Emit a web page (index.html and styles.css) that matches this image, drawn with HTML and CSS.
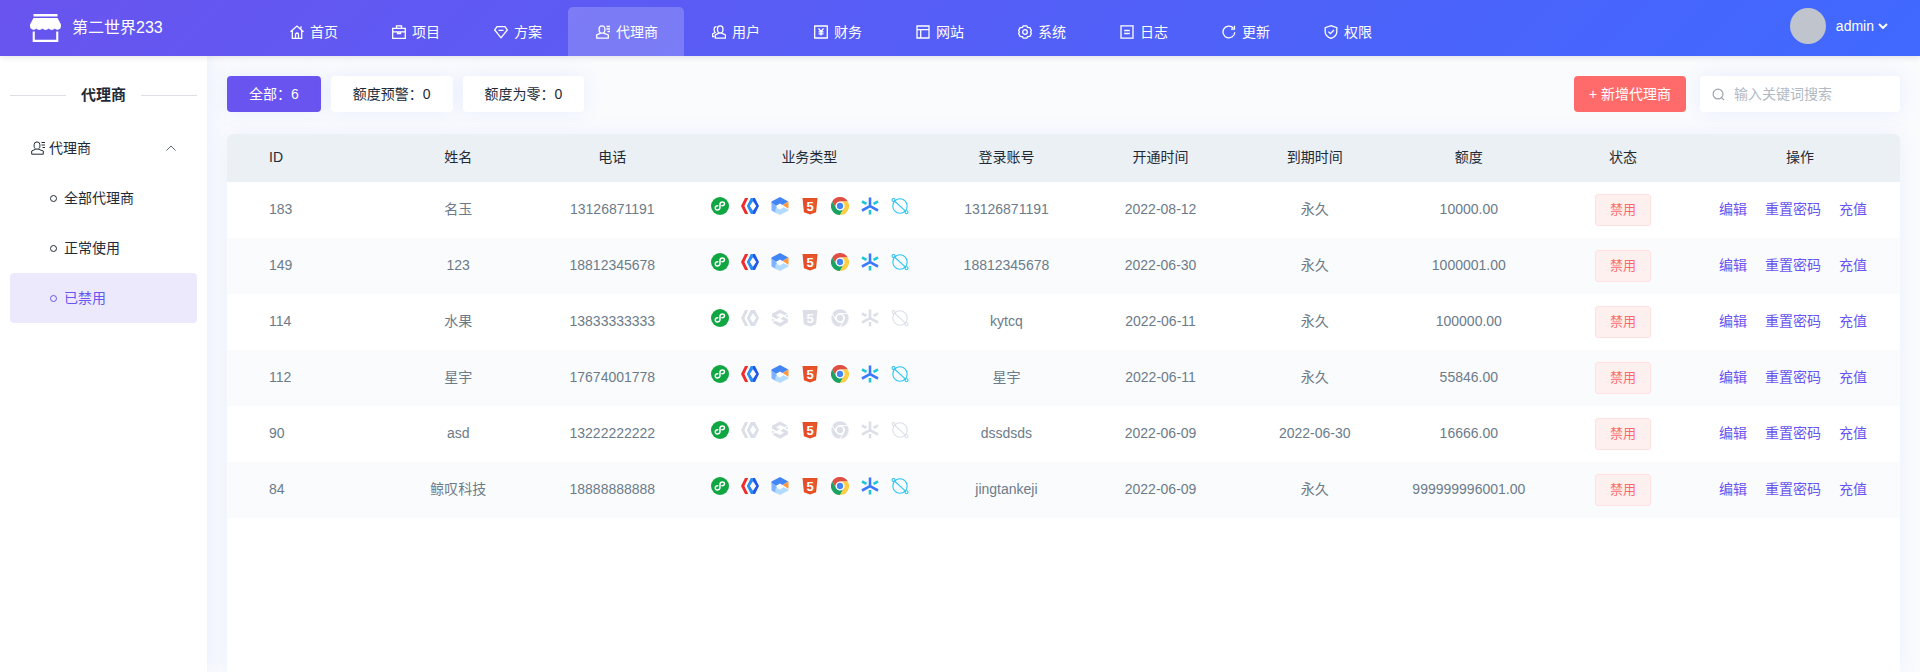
FILE: index.html
```html
<!DOCTYPE html>
<html lang="zh-CN">
<head>
  <meta charset="UTF-8" />
  <title>代理商</title>
  <link rel="stylesheet" href="styles.css">
</head>
<body>

  <!-- Icon sprite -->
  <svg class="sprite" aria-hidden="true">
    <symbol id="i-home" viewBox="0 0 14 14"><path d="M.5 6.800 7 1l6.500 5.800M2.300 5.500v7.800h9.400V5.500M5.500 13V9.500a1.500 1.500 0 0 1 3 0V13M11 3.500V1.300"/></symbol>
    <symbol id="i-case" viewBox="0 0 14 14"><path d="M.7 3.300h12.600v10H.7zM4.500 3.300V.8h5v2.500M.7 6.800h12.600M5.500 6.800v1.700h3V6.800"/></symbol>
    <symbol id="i-gem" viewBox="0 0 14 14"><path d="M3 1.700h8L13.300 5 7 12.800.7 5zM4.500 5.300h5"/></symbol>
    <symbol id="i-agent" viewBox="0 0 14 14"><path d="M6 .9a2.900 2.900 0 0 1 2.900 2.900v1.400c0 1.300-.7 2.300-1.500 2.900H4.600C3.800 7.500 3.100 6.500 3.100 5.200V3.800A2.900 2.900 0 0 1 6 .9zM4.600 8.200.7 10v3.200h11.600V10L7.400 8.200M10.500 1.500H14M10.500 4H14M11.500 6.500H14"/></symbol>
    <symbol id="i-users" viewBox="0 0 14 14"><path d="M8.200.9a2.700 2.700 0 0 1 2.700 2.700v1.600c0 1.300-.6 2.200-1.400 2.800H6.900c-.8-.6-1.400-1.500-1.400-2.800V3.600A2.700 2.700 0 0 1 8.200.9zM6.900 8.100 3.300 10v3.200h10.200V10L9.500 8.100M4.600 1.700C3.100 1.500 2.200 2.700 2.200 4v1.300c0 1 .4 1.700 1 2.200L.5 9v2.500h1.800"/></symbol>
    <symbol id="i-money" viewBox="0 0 14 14"><path d="M.7 1h12.600v12H.7zM4.500 3.500 7 6.500l2.500-3M7 6.500v4M4.500 6.800h5M4.500 8.800h5"/></symbol>
    <symbol id="i-site" viewBox="0 0 14 14"><path d="M1 1h12v12H1zM1 4.700h12M4.700 4.700V13"/></symbol>
    <symbol id="i-gear" viewBox="0 0 14 14"><path d="M5.200.8h3.600l.7 1.500 2.400.4 1.500 2.800L12.600 7l.8 1.500-1.500 2.800-2.400.4-.7 1.500H5.200l-.7-1.500-2.400-.4L.6 8.500 1.400 7 .6 5.500l1.500-2.800 2.400-.4z"/><circle cx="7" cy="7" r="2.300"/></symbol>
    <symbol id="i-log" viewBox="0 0 14 14"><path d="M1 .8h12v12.400H1zM4.200 5.500h5.600M4.200 8.500h5.600"/></symbol>
    <symbol id="i-refresh" viewBox="0 0 14 14"><path d="M12.800 7.300A5.900 5.900 0 1 1 11.300 3M12.500.8v3.400H9"/></symbol>
    <symbol id="i-shield" viewBox="0 0 14 14"><path d="M7 .7 12.800 2.600V7c0 3.200-2.500 5.200-5.800 6.400C3.700 12.200 1.200 10.200 1.200 7V2.600zM4.400 6.600l2 2L10 5"/></symbol>
    <symbol id="i-search" viewBox="0 0 14 14"><circle cx="6.500" cy="6.500" r="5.300"/><path d="m10.300 10.300 2.700 2.700"/></symbol>

    <symbol id="t-mini" viewBox="0 0 18 18">
      <circle class="green" cx="9" cy="9" r="9"/>
      <path class="line-white" d="M6.800 8.800c-3.300 0-3.300 4.200-.6 4.200 1.800 0 2.800-1.200 2.800-2.700V7.200c0-1.500 1-2.300 2.500-2.300 2.700 0 2.700 3.800-.6 3.900"/>
    </symbol>
    <symbol id="t-code" viewBox="0 0 18 18">
      <path class="red" d="M4 1h3.200L3.400 9l3.800 8H4L0 9z"/>
      <path class="blue" d="M9.800 1H12v3.200L8.800 9l3.200 4.800V17H9.800L5.800 9z"/>
      <path class="navy" d="M12 1h2l4 8-4 8h-2v-3.200L15.200 9 12 4.200z"/>
    </symbol>
    <symbol id="t-box" viewBox="0 0 18 18">
      <path class="sky" d="m9 0 8.300 4.500-5.800 3.500L9 6.500 5 8.800.5 6.500v-2z"/>
      <path class="orange" d="M17.500 4.500v7.300l-6-3.800z"/>
      <path class="soft" d="M.5 5.500 5 8.300l1 3V16.500L.5 13.500z"/>
      <path class="pale" d="m5 10.500 4 2 3.500-2.300 5 2.400v1L9 18l-5-2.700z"/>
    </symbol>
    <symbol id="t-box-off" viewBox="0 0 18 18">
      <path class="red" d="m9 .5 7.500 4-3 1.700L9 4 5 6.300l3.500 2L5.500 10 1 7.500V4.800zM12.500 7.800 17 10.300v3L9 17.700 1.500 13.500l3-1.700L9 14l4-2.200-3.500-2z"/>
      <path class="red" d="M1 9.500 3.500 11 1 12.400zM17 5.500v3l-2.700-1.400z"/>
    </symbol>
    <symbol id="t-html" viewBox="0 0 18 18">
      <path class="brick" d="M1.500 1h15l-1.400 14.300L9 17.500l-6.100-2.200z"/>
      <path class="flame" d="M9 2.200h6.200L14 14.500l-5 1.800z"/>
      <text class="five" x="9" y="13.500">5</text>
    </symbol>
    <symbol id="t-chrome" viewBox="0 0 24 24">
      <path class="coral seam" d="M1.600 6A12 12 0 0 1 22.400 6H12a6 6 0 0 0-5.200 9z"/>
      <path class="leaf seam" d="M12 24A12 12 0 0 1 1.600 6l5.200 9a6 6 0 0 0 10.400 0z"/>
      <path class="yellow seam" d="M22.400 6A12 12 0 0 1 12 24l5.200-9A6 6 0 0 0 12 6z"/>
      <circle class="white" cx="12" cy="12" r="5.600"/>
      <circle class="sky" cx="12" cy="12" r="4.200"/>
    </symbol>
    <symbol id="t-star" viewBox="0 0 18 18">
      <path class="arm" d="M9 .5V9.200M9 9.200l-8 4.300M9 9.200l8 4.300"/>
      <path class="tip" d="M9 13v4.500M1 4.500l4.500 2.300M17 4.500l-4.500 2.300"/>
    </symbol>
    <symbol id="t-orbit" viewBox="0 0 18 18">
      <circle class="ring" cx="9" cy="9" r="7.200"/>
      <path class="ring" d="m3.500 4 11 10.200"/>
      <circle class="ring" cx="2.500" cy="3" r="1.500"/>
      <circle class="ring" cx="15.500" cy="15.200" r="1.500"/>
    </symbol>
  </svg>

  <header class="header">
    <div class="brand">
      <svg class="brand-logo" viewBox="0 0 31 28" aria-hidden="true">
        <path d="M3.500 0h24v2.500h-24zM3.500 4h24L31 10.500v2a3.500 3.500 0 0 1-6.200 2 4 4 0 0 1-6.200 0 4 4 0 0 1-6.200 0 4 4 0 0 1-6.200 0A3.500 3.500 0 0 1 0 12.500v-2zM2.700 17.500h2.100v8.300h21.400v-8.300h2.100V28H2.700z"/>
      </svg>
      <span>第二世界233</span>
    </div>
    <nav class="nav">
      <a href="#"><svg class="icon"><use href="#i-home"/></svg>首页</a>
      <a href="#"><svg class="icon"><use href="#i-case"/></svg>项目</a>
      <a href="#"><svg class="icon"><use href="#i-gem"/></svg>方案</a>
      <a href="#" class="active"><svg class="icon"><use href="#i-agent"/></svg>代理商</a>
      <a href="#"><svg class="icon"><use href="#i-users"/></svg>用户</a>
      <a href="#"><svg class="icon"><use href="#i-money"/></svg>财务</a>
      <a href="#"><svg class="icon"><use href="#i-site"/></svg>网站</a>
      <a href="#"><svg class="icon"><use href="#i-gear"/></svg>系统</a>
      <a href="#"><svg class="icon"><use href="#i-log"/></svg>日志</a>
      <a href="#"><svg class="icon"><use href="#i-refresh"/></svg>更新</a>
      <a href="#"><svg class="icon"><use href="#i-shield"/></svg>权限</a>
    </nav>
    <button class="user" type="button">
      <span class="avatar"></span>
      <span>admin</span>
      <svg class="user-arrow" viewBox="0 0 10 6"><path d="m1 1 4 4 4-4"/></svg>
    </button>
  </header>

  <div class="layout">
    <aside class="sidebar">
      <h2 class="side-title">代理商</h2>
      <button class="side-group" type="button" aria-expanded="true">
        <svg class="icon"><use href="#i-agent"/></svg>
        <span>代理商</span>
        <svg class="side-arrow" viewBox="0 0 10 6"><path d="m.500 5.500 4.500-4.500 4.500 4.500"/></svg>
      </button>
      <ul class="side-menu">
        <li><a href="#">全部代理商</a></li>
        <li><a href="#">正常使用</a></li>
        <li><a href="#" class="active">已禁用</a></li>
      </ul>
    </aside>

    <main class="main">
      <div class="toolbar">
        <button class="filter active" type="button">全部：6</button>
        <button class="filter" type="button">额度预警：0</button>
        <button class="filter" type="button">额度为零：0</button>
        <button class="add-btn" type="button">+ 新增代理商</button>
        <label class="search">
          <svg class="icon"><use href="#i-search"/></svg>
          <input type="text" placeholder="输入关键词搜索" aria-label="输入关键词搜索">
        </label>
      </div>

      <div class="card">
        <table class="table">
          <thead>
            <tr>
              <th class="col-id">ID</th>
              <th>姓名</th>
              <th>电话</th>
              <th class="col-type">业务类型</th>
              <th>登录账号</th>
              <th>开通时间</th>
              <th>到期时间</th>
              <th>额度</th>
              <th>状态</th>
              <th class="col-ops">操作</th>
            </tr>
          </thead>
          <tbody>
            <tr>
              <td class="col-id">183</td>
              <td>名玉</td>
              <td>13126871191</td>
              <td>
                <div class="types">
                  <svg><use href="#t-mini"/></svg>
                  <svg><use href="#t-code"/></svg>
                  <svg><use href="#t-box"/></svg>
                  <svg><use href="#t-html"/></svg>
                  <svg><use href="#t-chrome"/></svg>
                  <svg><use href="#t-star"/></svg>
                  <svg><use href="#t-orbit"/></svg>
                </div>
              </td>
              <td>13126871191</td>
              <td>2022-08-12</td>
              <td>永久</td>
              <td>10000.00</td>
              <td class="status"><span class="tag">禁用</span></td>
              <td class="ops"><a href="#">编辑</a> <a href="#">重置密码</a> <a href="#">充值</a></td>
            </tr>
            <tr>
              <td class="col-id">149</td>
              <td>123</td>
              <td>18812345678</td>
              <td>
                <div class="types">
                  <svg><use href="#t-mini"/></svg>
                  <svg><use href="#t-code"/></svg>
                  <svg><use href="#t-box"/></svg>
                  <svg><use href="#t-html"/></svg>
                  <svg><use href="#t-chrome"/></svg>
                  <svg><use href="#t-star"/></svg>
                  <svg><use href="#t-orbit"/></svg>
                </div>
              </td>
              <td>18812345678</td>
              <td>2022-06-30</td>
              <td>永久</td>
              <td>1000001.00</td>
              <td class="status"><span class="tag">禁用</span></td>
              <td class="ops"><a href="#">编辑</a> <a href="#">重置密码</a> <a href="#">充值</a></td>
            </tr>
            <tr>
              <td class="col-id">114</td>
              <td>水果</td>
              <td>13833333333</td>
              <td>
                <div class="types">
                  <svg><use href="#t-mini"/></svg>
                  <svg class="off"><use href="#t-code"/></svg>
                  <svg class="off"><use href="#t-box-off"/></svg>
                  <svg class="off"><use href="#t-html"/></svg>
                  <svg class="off"><use href="#t-chrome"/></svg>
                  <svg class="off"><use href="#t-star"/></svg>
                  <svg class="off"><use href="#t-orbit"/></svg>
                </div>
              </td>
              <td>kytcq</td>
              <td>2022-06-11</td>
              <td>永久</td>
              <td>100000.00</td>
              <td class="status"><span class="tag">禁用</span></td>
              <td class="ops"><a href="#">编辑</a> <a href="#">重置密码</a> <a href="#">充值</a></td>
            </tr>
            <tr>
              <td class="col-id">112</td>
              <td>星宇</td>
              <td>17674001778</td>
              <td>
                <div class="types">
                  <svg><use href="#t-mini"/></svg>
                  <svg><use href="#t-code"/></svg>
                  <svg><use href="#t-box"/></svg>
                  <svg><use href="#t-html"/></svg>
                  <svg><use href="#t-chrome"/></svg>
                  <svg><use href="#t-star"/></svg>
                  <svg><use href="#t-orbit"/></svg>
                </div>
              </td>
              <td>星宇</td>
              <td>2022-06-11</td>
              <td>永久</td>
              <td>55846.00</td>
              <td class="status"><span class="tag">禁用</span></td>
              <td class="ops"><a href="#">编辑</a> <a href="#">重置密码</a> <a href="#">充值</a></td>
            </tr>
            <tr>
              <td class="col-id">90</td>
              <td>asd</td>
              <td>13222222222</td>
              <td>
                <div class="types">
                  <svg><use href="#t-mini"/></svg>
                  <svg class="off"><use href="#t-code"/></svg>
                  <svg class="off"><use href="#t-box-off"/></svg>
                  <svg><use href="#t-html"/></svg>
                  <svg class="off"><use href="#t-chrome"/></svg>
                  <svg class="off"><use href="#t-star"/></svg>
                  <svg class="off"><use href="#t-orbit"/></svg>
                </div>
              </td>
              <td>dssdsds</td>
              <td>2022-06-09</td>
              <td>2022-06-30</td>
              <td>16666.00</td>
              <td class="status"><span class="tag">禁用</span></td>
              <td class="ops"><a href="#">编辑</a> <a href="#">重置密码</a> <a href="#">充值</a></td>
            </tr>
            <tr>
              <td class="col-id">84</td>
              <td>鲸叹科技</td>
              <td>18888888888</td>
              <td>
                <div class="types">
                  <svg><use href="#t-mini"/></svg>
                  <svg><use href="#t-code"/></svg>
                  <svg><use href="#t-box"/></svg>
                  <svg><use href="#t-html"/></svg>
                  <svg><use href="#t-chrome"/></svg>
                  <svg><use href="#t-star"/></svg>
                  <svg><use href="#t-orbit"/></svg>
                </div>
              </td>
              <td>jingtankeji</td>
              <td>2022-06-09</td>
              <td>永久</td>
              <td>999999996001.00</td>
              <td class="status"><span class="tag">禁用</span></td>
              <td class="ops"><a href="#">编辑</a> <a href="#">重置密码</a> <a href="#">充值</a></td>
            </tr>
          </tbody>
        </table>
      </div>
    </main>
  </div>

</body>
</html>
```

FILE: styles.css
```css
* {
  margin: 0;
  padding: 0;
  box-sizing: border-box;
}

body {
  min-height: 100vh;
  display: flex;
  flex-direction: column;
  background: #fafbfd;
  color: #1e2b37;
  font-family: "Liberation Sans", "Noto Sans CJK SC", sans-serif;
  font-size: 14px;
  line-height: 20px;
}

a {
  color: inherit;
  text-decoration: none;
}

button, input {
  font: inherit;
  color: inherit;
  border: none;
  background: none;
}

button {
  cursor: pointer;
}

.sprite {
  display: none;
}

.icon {
  flex: none;
  width: 14px;
  height: 14px;
  fill: none;
  stroke: currentColor;
  stroke-width: 1.3;
}

/* Header */
.header {
  position: relative;
  z-index: 2;
  display: flex;
  height: 56px;
  background: linear-gradient(135deg, #6954ef, #4069ff);
  box-shadow: 0 1px 6px rgba(0, 21, 41, 0.12);
  color: #fff;
}

.brand {
  display: flex;
  align-items: center;
  gap: 11px;
  width: 262px;
  padding: 0 30px;
  font-size: 16px;
}

.brand-logo {
  width: 31px;
  height: 28px;
  fill: #fff;
}

.nav {
  display: flex;
  flex: 1;
  padding-top: 7px;
}

.nav a {
  display: flex;
  align-items: center;
  gap: 6px;
  padding: 0 26px 0 28px;
  border-radius: 5px 5px 0 0;
  white-space: nowrap;
}

.nav a.active {
  background: rgba(255, 255, 255, 0.2);
}

.user {
  display: flex;
  align-items: center;
  padding: 0 32px 4px 0;
}

.avatar {
  width: 36px;
  height: 36px;
  margin-right: 10px;
  border-radius: 50%;
  background: #c0c4cc;
}

.user-arrow {
  width: 10px;
  height: 6px;
  margin-left: 4px;
  fill: none;
  stroke: #fff;
  stroke-width: 2;
}

/* Layout */
.layout {
  display: flex;
  flex: 1;
}

.sidebar {
  width: 207px;
  padding: 16px 10px;
  background: #fff;
  box-shadow: 0 0 20px rgba(64, 120, 255, 0.12);
}

.side-title {
  display: flex;
  align-items: center;
  justify-content: space-between;
  height: 46px;
  margin-bottom: 5px;
  font-size: 15px;
}

.side-title::before,
.side-title::after {
  content: "";
  width: 56px;
  height: 1px;
  background: #dcdfe6;
}

.side-group {
  display: flex;
  align-items: center;
  gap: 4px;
  width: 100%;
  height: 50px;
  padding: 0 21px;
}

.side-group .icon {
  stroke-width: 1;
}

.side-arrow {
  width: 10px;
  height: 6px;
  margin-left: auto;
  fill: none;
  stroke: #606a75;
}

.side-menu {
  list-style: none;
}

.side-menu a {
  display: flex;
  align-items: center;
  gap: 7px;
  height: 50px;
  padding-left: 40px;
  border-radius: 4px;
}

.side-menu a::before {
  content: "";
  width: 7px;
  height: 7px;
  border: 1px solid currentColor;
  border-radius: 50%;
  box-sizing: border-box;
}

.side-menu a.active {
  background: #ece9fd;
  color: #6954f0;
}

.main {
  display: flex;
  flex: 1;
  flex-direction: column;
  min-width: 0;
  padding: 20px 20px 0;
}

/* Toolbar */
.toolbar {
  display: flex;
  gap: 10px;
  margin-bottom: 22px;
}

.filter {
  height: 36px;
  padding: 0 22px;
  border-radius: 4px;
  background: #fff;
  box-shadow: 0 0 20px rgba(64, 120, 255, 0.1);
}

.filter.active {
  background: #6954f0;
  color: #fff;
}

.add-btn {
  height: 36px;
  margin-left: auto;
  padding: 0 15px;
  border-radius: 4px;
  background: #ff6b6b;
  color: #fff;
}

.search {
  display: flex;
  align-items: center;
  gap: 9px;
  width: 200px;
  height: 36px;
  margin-left: 4px;
  padding: 0 12px;
  border-radius: 4px;
  background: #fff;
  box-shadow: 0 0 20px rgba(64, 120, 255, 0.1);
}

.search .icon {
  width: 13px;
  height: 13px;
  color: #9aa5b1;
}

.search input {
  width: 100%;
  outline: none;
}

.search input::placeholder {
  color: #b0bac5;
}

/* Table */
.card {
  flex: 1;
  overflow: hidden;
  border-radius: 6px 6px 0 0;
  background: #fff;
  box-shadow: 0 0 20px rgba(64, 120, 255, 0.08);
}

.table {
  width: 100%;
  table-layout: fixed;
  border-collapse: collapse;
  text-align: center;
}

.table th {
  height: 48px;
  padding-bottom: 2px;
  background: #ebf0f4;
  font-weight: normal;
}

.table td {
  height: 56px;
  padding-bottom: 2px;
  color: #6c7b8a;
}

.table td.status {
  padding-bottom: 0;
}

.table tbody tr:nth-child(even) {
  background: #fafbfd;
}

.table .col-id {
  padding-left: 42px;
  text-align: left;
}

.col-type {
  width: 240px;
}

.col-ops {
  width: 200px;
}

.tag {
  display: inline-block;
  padding: 5px 14px;
  border: 1px solid #ffe1e1;
  border-radius: 3px;
  background: #fff0f0;
  color: #ff6b6b;
  font-size: 13px;
}

.table .ops {
  color: #6954f0;
  white-space: nowrap;
}

.ops a {
  margin-right: 14px;
}

/* Business type icons, --off turns one grey */
.types {
  display: flex;
  justify-content: center;
  gap: 12px;
  padding: 0 0 6px 2px;
}

.types svg {
  width: 18px;
  height: 18px;
}

.types .off {
  --off: #dcdfe8;
  --seam: #fff;
}

.green { fill: #10a642; }
.red { fill: var(--off, #f02d2d); }
.blue { fill: var(--off, #2b8cf7); }
.navy { fill: var(--off, #2457e6); }
.sky { fill: var(--off, #4285f4); }
.soft { fill: #7fb2ff; }
.pale { fill: #b3dbff; }
.orange { fill: #ff9a3c; }
.brick { fill: var(--off, #e44d26); }
.flame { fill: var(--off, #e9582b); }
.coral { fill: var(--off, #e04f43); }
.leaf { fill: var(--off, #1aa260); }
.yellow { fill: var(--off, #ffce44); }
.white { fill: #fff; }

.seam {
  stroke: var(--seam, none);
  stroke-width: 1;
}

.five {
  fill: #fff;
  font-size: 13px;
  font-weight: bold;
  text-anchor: middle;
}

.line-white {
  fill: none;
  stroke: #fff;
  stroke-width: 1.5;
  stroke-linecap: round;
}

.arm, .tip {
  fill: none;
  stroke: var(--off, #3a7afe);
  stroke-width: 2.6;
}

.tip {
  stroke: var(--off, #1cc8d8);
}

.ring {
  fill: none;
  stroke: var(--off, #2ac4f5);
  stroke-width: 1.1;
}
```
